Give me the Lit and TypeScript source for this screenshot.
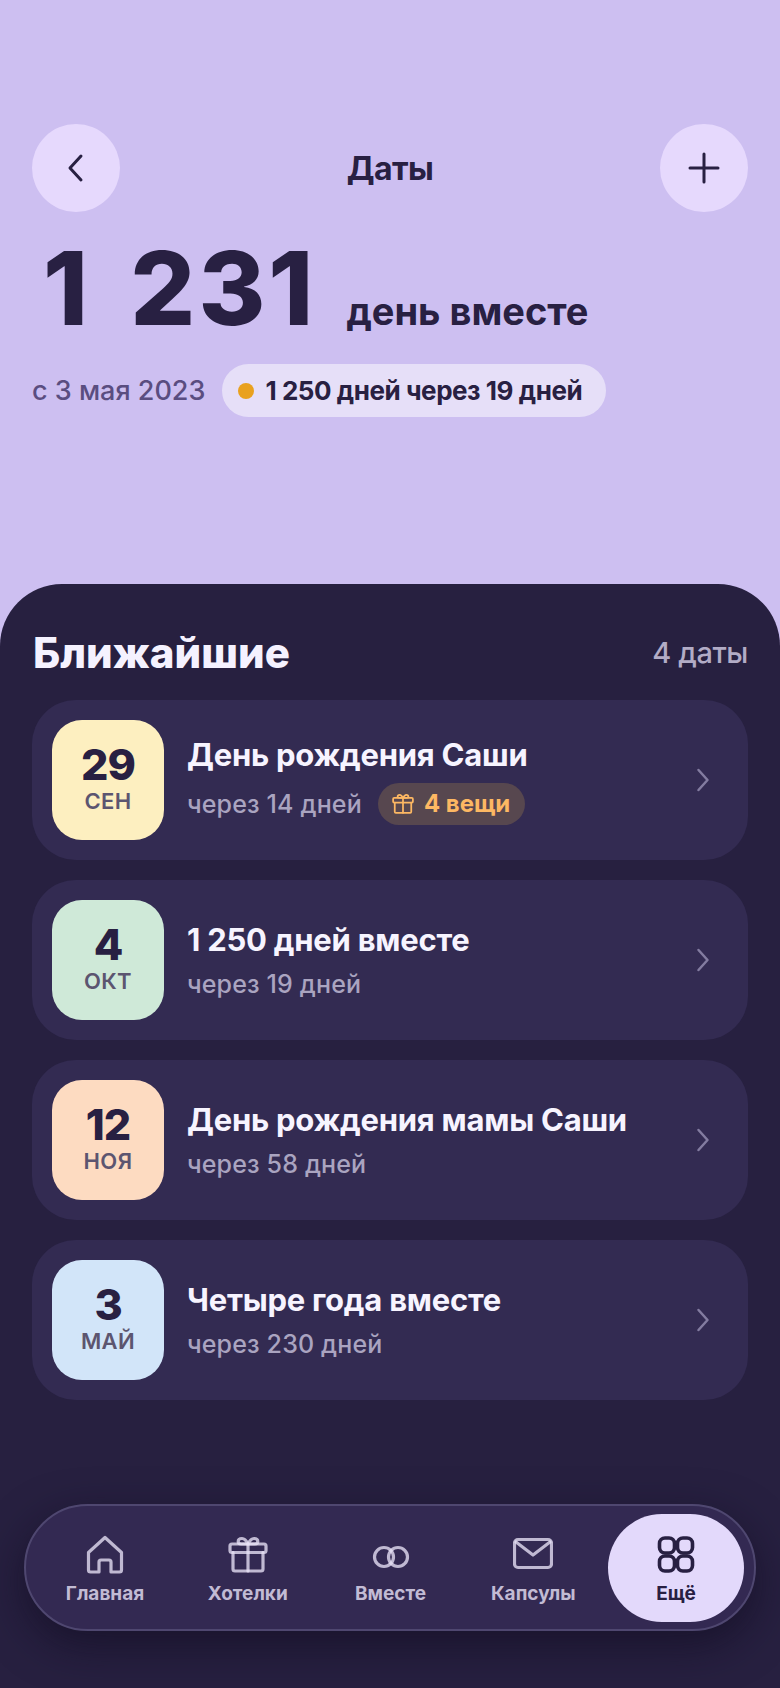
import { LitElement, html, css, svg } from "lit";
import { customElement } from "lit/decorators.js";

const gift = (size: number) => html`<svg class="gift" width=${size} height=${size} viewBox="0 0 40 40" fill="none" stroke="currentColor" stroke-width="3.200" stroke-linejoin="round" stroke-linecap="round">
  <rect x="2" y="9" width="36" height="8.500" rx="2"/>
  <path d="M5 17.500V34a2 2 0 0 0 2 2h26a2 2 0 0 0 2-2V17.500"/>
  <path d="M20 9v27"/>
  <path d="M20 9c-1.500-3-3.500-5.500-6-5.500-2.500 0-3.800 1.300-3.800 3 0 1.700 1.200 2.500 3 2.500z"/>
  <path d="M20 9c1.500-3 3.500-5.500 6-5.500 2.500 0 3.800 1.300 3.800 3 0 1.700-1.200 2.500-3 2.500z"/>
</svg>`;

const navIcons = {
  home: svg`<path d="M3.500 17.500 20 2.500l16.500 15V35a2 2 0 0 1-2 2H26V27a2 2 0 0 0-2-2H16a2 2 0 0 0-2 2v10H5.500a2 2 0 0 1-2-2z"/>`,
  rings: svg`<circle cx="13" cy="22" r="9.500"/><circle cx="27" cy="22" r="9.500"/>`,
  mail: svg`<rect x="1.500" y="4.500" width="37" height="28" rx="3.500"/><path d="M3 7l17 13L37 7"/>`,
  more: svg`<rect x="3.500" y="3" width="15" height="15" rx="5.500"/><rect x="21.500" y="3" width="15" height="15" rx="5.500"/><rect x="3.500" y="21" width="15" height="15" rx="5.500"/><rect x="21.500" y="21" width="15" height="15" rx="5.500"/>`,
};

const dates = [
  { d: "29", m: "СЕН", bg: "#fdefc0", t: "День рождения Саши", s: "через 14 дней", badge: "4 вещи" },
  { d: "4", m: "ОКТ", bg: "#cfe9d8", t: "1 250 дней вместе", s: "через 19 дней" },
  { d: "12", m: "НОЯ", bg: "#fddbc1", t: "День рождения мамы Саши", s: "через 58 дней" },
  { d: "3", m: "МАЙ", bg: "#d2e5f9", t: "Четыре года вместе", s: "через 230 дней" },
];

@customElement("app-root")
export class AppRoot extends LitElement {
  static styles = css`
    :host {
      display: flex;
      flex-direction: column;
      height: 1688px;
      width: 780px;
      background: #cdbff1;
      font-family: "Inter", "Noto Sans", sans-serif;
      color: #282042;
      overflow: hidden;
    }
    .top { height: 584px; box-sizing: border-box; padding: 124px 32px 0; flex: none; }
    .bar { display: flex; align-items: center; justify-content: space-between; }
    .round {
      width: 88px; height: 88px; border-radius: 50%;
      background: #e6d9fd; display: flex; align-items: center; justify-content: center;
    }
    .title { font-size: 32px; font-weight: 700; letter-spacing: -0.5px; }
    .hero { display: flex; align-items: baseline; gap: 30px; padding-left: 11px; margin-top: 14px; }
    .num { font-size: 102px; font-weight: 800; line-height: 124px; letter-spacing: 3px; word-spacing: 14px; }
    .unit { font-size: 38px; font-weight: 700; }
    .since { display: flex; align-items: center; gap: 17px; margin-top: 14px; }
    .from { font-size: 27px; color: #5a4d80; font-weight: 500; }
    .pill {
      display: flex; align-items: center; gap: 11px; height: 53px; box-sizing: border-box;
      padding: 0 24px 0 16px; border-radius: 27px; background: #e6dff8;
      font-size: 26px; font-weight: 700; letter-spacing: -0.45px;
    }
    .dot { width: 16px; height: 16px; border-radius: 50%; background: #e9a11f; }
    .sheet {
      flex: 1; display: flex; flex-direction: column; box-sizing: border-box;
      background: linear-gradient(#272040 0, #272040 1400px, #231d3a 100%);
      border-radius: 62px 62px 0 0; padding: 38px 32px 0;
    }
    .head { display: flex; align-items: center; justify-content: space-between; height: 60px; }
    .head h2 { margin: 0 0 0 1px; font-size: 42px; font-weight: 800; color: #f5f2ff; }
    .count { font-size: 29px; color: #b2acc6; font-weight: 500; letter-spacing: -0.4px; }
    .list { display: flex; flex-direction: column; gap: 20px; margin-top: 18px; }
    .card {
      display: flex; align-items: center; height: 160px; box-sizing: border-box;
      padding: 0 38px 0 20px; border-radius: 44px; background: #332b52;
    }
    .tile {
      width: 112px; height: 120px; border-radius: 30px; flex: none; box-sizing: border-box; padding-bottom: 4px;
      display: flex; flex-direction: column; align-items: center; justify-content: center;
    }
    .day { font-size: 43px; font-weight: 800; line-height: 46px; letter-spacing: -1px; }
    .mon { font-size: 22px; font-weight: 600; line-height: 28px; color: #5c5570; letter-spacing: 0.4px; }
    .body { flex: 1; margin-left: 23px; }
    .name { font-size: 31px; font-weight: 700; color: #f7f4ff; letter-spacing: -0.25px; line-height: 40px; }
    .sub { display: flex; align-items: center; gap: 16px; margin-top: 8px; line-height: 32px; font-size: 25px; font-weight: 500; color: #aaa4c0; letter-spacing: 0.15px; }
    .badge {
      display: flex; align-items: center; gap: 10px; height: 42px; box-sizing: border-box;
      padding: 0 15px 0 14px; border-radius: 21px; background: #57474f;
      color: #fdb863; font-size: 24px; font-weight: 700; letter-spacing: 0;
    }
    .chev { flex: none; color: #837ca0; display: flex; }
    .navwrap { margin: auto -8px 0; padding-bottom: 57px; }
    .nav {
      height: 127px; box-sizing: border-box; border: 2px solid #4f4770; border-radius: 64px;
      background: #332952; display: flex; align-items: center; justify-content: space-between;
      padding: 0 10px 0 11px; box-shadow: 0 14px 44px rgba(15, 10, 30, 0.6);
    }
    .item {
      width: 136px; height: 108px; border-radius: 54px; box-sizing: border-box; padding-top: 4px;
      display: flex; flex-direction: column;
      align-items: center; justify-content: center; gap: 7px; color: #c2bbd4;
      font-size: 19px; font-weight: 700;
    }
    .item .gift { color: rgba(232, 226, 246, 0.78); }
    .item.on { background: #e3d9fb; color: #282042; }
    .icon {
      width: 40px; height: 40px; fill: none; stroke: rgba(232, 226, 246, 0.78); stroke-width: 3.200;
      stroke-linejoin: round; stroke-linecap: round; display: block;
    }
    .item.on .icon { stroke: #282042; stroke-width: 3.600; }
  `;

  render() {
    const chevron = html`<span class="chev"><svg width="14" height="24" viewBox="0 0 14 24" fill="none" stroke="currentColor" stroke-width="2.500" stroke-linecap="round" stroke-linejoin="round"><path d="M2.500 2l9 10-9 10"/></svg></span>`;
    return html`
      <div class="top">
        <div class="bar">
          <div class="round"><svg width="32" height="32" viewBox="0 0 32 32" fill="none" stroke="#282042" stroke-width="3" stroke-linecap="round" stroke-linejoin="round"><path d="M21 4 10 16l11 12"/></svg></div>
          <div class="title">Даты</div>
          <div class="round"><svg width="32" height="32" viewBox="0 0 32 32" fill="none" stroke="#282042" stroke-width="3" stroke-linecap="round"><path d="M16 2v28M2 16h28"/></svg></div>
        </div>
        <div class="hero"><span class="num">1 231</span><span class="unit">день вместе</span></div>
        <div class="since">
          <span class="from">с 3 мая 2023</span>
          <span class="pill"><span class="dot"></span>1 250 дней через 19 дней</span>
        </div>
      </div>
      <div class="sheet">
        <div class="head"><h2>Ближайшие</h2><span class="count">4 даты</span></div>
        <div class="list">
          ${dates.map((x) => html`
            <div class="card">
              <div class="tile" style="background:${x.bg}">
                <span class="day">${x.d}</span><span class="mon">${x.m}</span>
              </div>
              <div class="body">
                <div class="name">${x.t}</div>
                <div class="sub"><span>${x.s}</span>${x.badge ? html`<span class="badge">${gift(22)}${x.badge}</span>` : ""}</div>
              </div>
              ${chevron}
            </div>`)}
        </div>
        <div class="navwrap">
          <div class="nav">
            <div class="item"><svg class="icon" viewBox="0 0 40 40">${navIcons.home}</svg>Главная</div>
            <div class="item">${gift(40)}Хотелки</div>
            <div class="item"><svg class="icon" viewBox="0 0 40 40">${navIcons.rings}</svg>Вместе</div>
            <div class="item"><svg class="icon" viewBox="0 0 40 40">${navIcons.mail}</svg>Капсулы</div>
            <div class="item on"><svg class="icon" viewBox="0 0 40 40">${navIcons.more}</svg>Ещё</div>
          </div>
        </div>
      </div>
    `;
  }
}
